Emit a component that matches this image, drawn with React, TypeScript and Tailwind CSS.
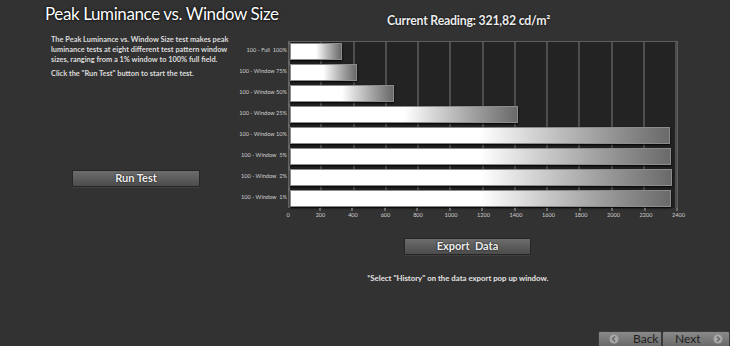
import React from "react"

const font = { fontFamily: "Lato, 'Open Sans', sans-serif" }

const rows = [
  { label: "100 - Full  100%", value: 321.82 },
  { label: "100 - Window 75%", value: 413 },
  { label: "100 - Window 50%", value: 648 },
  { label: "100 - Window 25%", value: 1413 },
  { label: "100 - Window 10%", value: 2357 },
  { label: "100 - Window  5%", value: 2363 },
  { label: "100 - Window  2%", value: 2370 },
  { label: "100 - Window  1%", value: 2363 },
]

const ticks = [0, 200, 400, 600, 800, 1000, 1200, 1400, 1600, 1800, 2000, 2200, 2400]
const MAX = 2400

export default function App() {
  return (
    <div className="w-[730px] h-[346px] bg-[#323232] flex flex-col overflow-hidden text-[#e6e6e6]" style={font}>
      <div className="flex flex-1">
        {/* left column */}
        <div className="w-[230px] shrink-0 flex flex-col">
          <h1 className="pl-[45px] pt-[2px] text-[17px] tracking-[-0.4px] leading-[24px] whitespace-nowrap text-white [text-shadow:0_0_3px_#000,0_0_1px_#000]">
            Peak Luminance vs. Window Size
          </h1>
          <div className="pl-[51px] pt-[9px] text-[7.4px] leading-[10px] font-bold text-[#dcdcdc] whitespace-nowrap">
            <p>
              The Peak Luminance vs. Window Size test makes peak
              <br />
              luminance tests at eight different test pattern window
              <br />
              sizes, ranging from a 1% window to 100% full field.
            </p>
            <p className="mt-[4px]">Click the "Run Test" button to start the test.</p>
          </div>
          <div className="pl-[72px] mt-[91px]">
            <Button className="w-[128px]">Run Test</Button>
          </div>
        </div>

        {/* right column */}
        <div className="flex-1 flex flex-col">
          <div className="pl-[157px] pt-[13px] h-[41px] text-[12.3px] tracking-[-0.2px] leading-[16px] font-bold whitespace-nowrap text-[#ececec] [text-shadow:0_0_2px_#000]">
            Current Reading: 321,82 cd/m²
          </div>

          {/* chart */}
          <div className="flex">
            <div className="w-[58px] shrink-0 flex flex-col gap-[4px] pt-[1px]">
              {rows.map((r) => (
                <div key={r.label} className="h-[17px] flex items-center justify-end pr-[1px] text-[5.6px] whitespace-pre text-[#cfcfcf]">
                  {r.label}
                </div>
              ))}
            </div>
            <div className="flex flex-col">
              <div className="relative w-[390px] h-[167px] bg-[#232323] border-t border-r border-[#5e5e5e] border-l-2 border-l-[#6a6a6a]">
                <div className="absolute inset-0 grid grid-cols-12">
                  {ticks.slice(1).map((t) => (
                    <div key={t} className="border-r-2 border-[#4e4e4e]" />
                  ))}
                </div>
                <div className="absolute inset-0 flex flex-col gap-[4px] pt-[1px]">
                  {rows.map((r) => (
                    <div key={r.label} className="h-[17px] flex">
                      <div
                        className="h-full border border-[#8c8c8c] bg-gradient-to-r from-white from-50% to-[#6a6a6a] shadow-[0_1px_2px_#000]"
                        style={{ width: `${(r.value / MAX) * 100}%` }}
                      />
                    </div>
                  ))}
                </div>
              </div>
              <div className="relative w-[390px] h-[12px]">
                <div className="grid grid-cols-12 h-[3px]">
                  {ticks.slice(1).map((t) => (
                    <div key={t} className="border-r-2 border-[#6a6a6a]" />
                  ))}
                </div>
                <div className="flex justify-between -mx-[6px] text-[5.6px] leading-[8px] text-[#cfcfcf]">
                  {ticks.map((t) => (
                    <span key={t} className="w-[12px] text-center">{t}</span>
                  ))}
                </div>
              </div>
            </div>
          </div>

          <div className="pl-[174px] mt-[18px]">
            <Button className="w-[127px]">Export&nbsp; Data</Button>
          </div>
          <div className="pl-[137px] mt-[18px] text-[7.8px] font-bold whitespace-nowrap text-[#e2e2e2]">
            *Select "History" on the data export pop up window.
          </div>
        </div>
      </div>

      {/* bottom nav */}
      <div className="flex justify-end h-[15px]">
        <NavButton dir="back" />
        <NavButton dir="next" />
      </div>
    </div>
  )
}

function Button({ children, className = "" }: { children: React.ReactNode; className?: string }) {
  return (
    <div
      className={`h-[17px] flex items-center justify-center bg-gradient-to-b from-[#6d6d6d] to-[#4c4c4c] border border-[#262626] shadow-[0_1px_0_#3e3e3e] text-[11px] font-bold text-[#ededed] [text-shadow:0_0_2px_#000] ${className}`}
    >
      {children}
    </div>
  )
}

function NavButton({ dir }: { dir: "back" | "next" }) {
  const back = dir === "back"
  return (
    <div
      className={`h-[16px] flex items-center gap-[8px] bg-gradient-to-b from-[#8a8a8a] to-[#6a6a6a] border border-[#3a3a3a] rounded-t-[2px] text-[12px] text-[#1e1e1e] ${
        back ? "w-[64px] pl-[10px]" : "w-[68px] pl-[12px] flex-row-reverse justify-start pr-[6px]"
      }`}
    >
      <svg width="10" height="10" viewBox="0 0 10 10" className="shrink-0">
        <circle cx="5" cy="5" r="4.5" fill="#a8a8a8" />
        <path d={back ? "M6 2.5 3.5 5 6 7.5" : "M4 2.5 6.5 5 4 7.5"} stroke="#6a6a6a" strokeWidth="1.6" fill="none" />
      </svg>
      <span className={back ? "ml-[6px]" : "mr-auto"}>{back ? "Back" : "Next"}</span>
    </div>
  )
}
